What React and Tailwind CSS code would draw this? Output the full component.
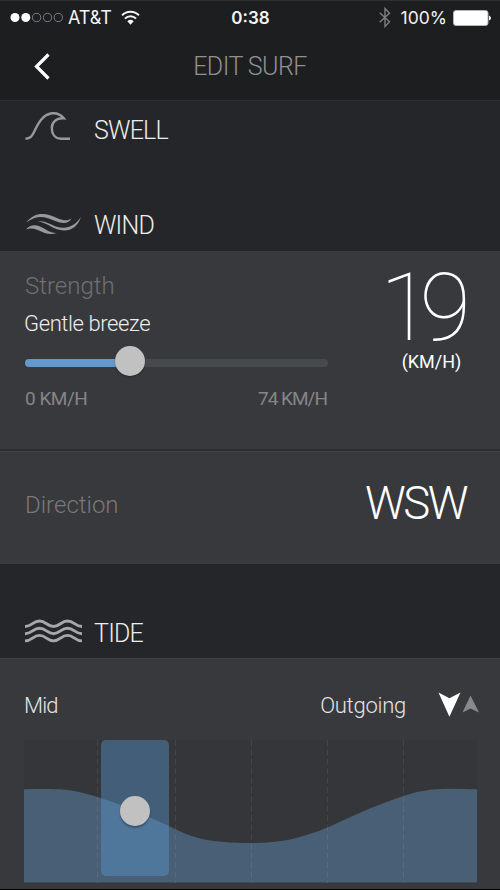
const dividers = [73.5, 151.5, 227.5, 303.5, 379.5];

function StatusBar() {
  return (
    <div className="flex h-[34px] items-center border-t border-[#2d2f31] pl-[10px] pr-[9px] font-['Inter',sans-serif] text-[17.5px] text-[#f4f4f4]">
      <div className="flex flex-1 items-center">
        <svg width="54" height="12" viewBox="0 0 54 12" fill="none">
          <circle cx="5" cy="5.5" r="4.5" fill="#fff" />
          <circle cx="15.8" cy="5.5" r="4.5" fill="#fff" />
          <circle cx="26.6" cy="5.5" r="4.1" stroke="#85878a" strokeWidth="0.9" />
          <circle cx="37.5" cy="5.5" r="4.1" stroke="#85878a" strokeWidth="0.9" />
          <circle cx="48.3" cy="5.5" r="4.1" stroke="#85878a" strokeWidth="0.9" />
        </svg>
        <span className="ml-[4px] text-[18px] tracking-[-0.1px]">AT&amp;T</span>
        <svg className="-mt-px ml-[9px]" width="19" height="15" viewBox="0 0 20 16" fill="none" stroke="#f4f4f4">
          <path d="M1 5.6C6 .6 14 .6 19 5.6" strokeWidth="2.2" />
          <path d="M4 9.200C7.400 5.900 12.600 5.900 16 9.200" strokeWidth="2.2" />
          <path d="M6.600 12Q10 8.900 13.400 12L10 15.600Z" fill="#f4f4f4" stroke="none" />
        </svg>
      </div>
      <span className="pt-[2px] text-[17px] font-semibold">0:38</span>
      <div className="flex flex-1 items-center justify-end">
        <svg width="12" height="21" viewBox="0 0 12 21" fill="none" stroke="#7d7f81" strokeWidth="1.4">
          <path d="M.700 5.800 10.500 14.800 6 19.500V1.500L10.500 6.200.700 15.200" />
        </svg>
        <span className="ml-[10px]">100%</span>
        <svg className="ml-[6px]" width="38" height="16" viewBox="0 0 38 16">
          <rect x=".5" y=".5" width="34.500" height="15" rx="2.500" fill="#fff" stroke="#b5b5b5" />
          <path d="M36 5.500Q38 6.500 38 8T36 10.500Z" fill="#fff" />
        </svg>
      </div>
    </div>
  );
}

function SectionTitle({ icon, children }) {
  return (
    <div className="flex items-center pl-[25px] text-[25px] font-light text-[#ededed]">
      <div className="w-[69px]">{icon}</div>
      <h2 className="pt-[2px] tracking-[-0.8px]">{children}</h2>
    </div>
  );
}

function SwellIcon() {
  return (
    <svg className="-mt-[7px]" width="46" height="30" viewBox="0 0 46 30" fill="none" stroke="#97999b" strokeWidth="2.400">
      <path d="M.500 27.700C6 27.700 7.500 24 9.500 20C13.500 11.500 18 3.500 27 2.300C32 1.700 36.500 4.500 38.800 7.300C31 6.800 26.800 11.500 26.800 17C26.800 23 30 27.700 36 27.700H45" />
    </svg>
  );
}

function WindIcon() {
  return (
    <svg width="57" height="22" viewBox="0 0 57 22" fill="#97999b">
      <path d="M1 9.500C8 1.200 16-.5 25 2.200C33 4.700 40 10 46.500 5.500C44 10.500 38 11 31 8.300C23 5.200 17 2.300 9 5.200C6 6.500 3.500 8 1 9.500Z" />
      <path d="M13 8.500C20 7.500 25 11.500 31 13.500C41 16.500 49 14 56 4C52 15 44 19.500 34 16.800C27 15 21 9.500 13 8.500Z" />
      <path d="M1 16.500C5 11.500 10 11.700 15 13.500C21 16 25 20.500 32 20C25 22.700 19 20 14 17.500C9 15 5 14.800 1 16.500Z" />
    </svg>
  );
}

function TideIcon() {
  return (
    <svg className="-mt-[2px]" width="57" height="24" viewBox="0 0 57 24" fill="none" stroke="#a6a7a9" strokeWidth="2.900">
      <path d="M0 7.500C7 7.500 8 2 14.500 2S22 7.500 28.500 7.500S36 2 42.500 2S50 7.500 57 7.500" />
      <path d="M0 14.700C7 14.700 8 9.200 14.500 9.200S22 14.700 28.500 14.700S36 9.200 42.500 9.200S50 14.700 57 14.700" />
      <path d="M0 21.900C7 21.900 8 16.400 14.500 16.400S22 21.900 28.500 21.900S36 16.400 42.500 16.400S50 21.900 57 21.900" />
    </svg>
  );
}

function TideChart() {
  return (
    <div className="relative mx-[24px] h-[143px] w-[453px] bg-[#353639]">
      <svg className="block" width="453" height="143" viewBox="0 0 453 143" fill="none">
        <path
          d="M0 49.300C10 48.700 25 48.800 36 49.200C50 50 60 53 73.500 57C95 64 120 74 151 89C170 98 185 103 228 103C255 103 275 99 303.500 87.500C330 75 355 64 379.500 56C395 51 405 49 425 48.700Q440 48.700 453 49.300V142.500H0Z"
          fill="#485f75"
        />
        {dividers.map((x) => (
          <path key={x} d={`M${x} 0V143`} stroke="#fff" strokeOpacity=".08" strokeDasharray="6 3.400" />
        ))}
      </svg>
      <div className="absolute left-[77px] top-0 h-[136px] w-[68px] rounded-[5px] bg-[#5b9bd8]/40" />
      <div className="absolute left-[96px] top-[56px] size-[30px] rounded-full bg-[#c1c1c1] shadow-[0_2px_2px_rgba(0,0,0,0.3)]" />
    </div>
  );
}

export default function App() {
  return (
    <div className="flex h-[890px] w-[500px] flex-col overflow-hidden bg-[#25262a] font-['Roboto',sans-serif] leading-none">
      <header className="h-[101px] shrink-0 border-b border-[#2b2c2f] bg-[#1d1e20]">
        <StatusBar />
        <div className="flex h-[64px] items-center justify-between">
          <div className="w-[100px] pl-[34px]">
            <svg width="18" height="27" viewBox="0 0 18 27" fill="none" stroke="#fff" strokeWidth="3.200">
              <path d="M14.500 1.500 2.500 13.500 14.500 25.500" />
            </svg>
          </div>
          <h1 className="text-[25px] font-light tracking-[-0.55px] text-[#8f9092]">EDIT SURF</h1>
          <div className="w-[100px]" />
        </div>
      </header>

      <section className="flex h-[150px] shrink-0 flex-col justify-between">
        <div className="flex h-[57px] flex-col justify-center">
          <SectionTitle icon={<SwellIcon />}>SWELL</SectionTitle>
        </div>
        <div className="flex h-[54px] flex-col justify-center">
          <SectionTitle icon={<WindIcon />}>WIND</SectionTitle>
        </div>
      </section>

      <section className="flex h-[200px] shrink-0 border-b-2 border-t border-b-[#2d2e31] border-t-[#3c3d40] bg-[#38393c] pl-[25px]">
        <div className="w-[303px] pt-[22px]">
          <div className="text-[24px] font-light text-[#6f7073]">Strength</div>
          <div className="-ml-px mt-[15px] text-[22px] font-light tracking-[-0.4px] text-[#ededed]">Gentle breeze</div>
          <div className="relative mt-[24px] h-[8px] rounded-full bg-[#474a4d]">
            <div className="h-full w-[105px] rounded-full bg-[#6399cd]" />
            <div className="absolute -top-[13px] left-[90px] size-[30px] rounded-full bg-[#c1c1c1] shadow-[0_1px_2px_rgba(0,0,0,0.3)]" />
          </div>
          <div className="mt-[22px] flex justify-between text-[19px] text-[#858688]">
            <span className="tracking-[-0.5px]">0 KM/H</span>
            <span className="mr-px tracking-[-1px]">74 KM/H</span>
          </div>
        </div>
        <div className="flex flex-1 flex-col items-center pl-[35px] pt-[12px] text-white">
          <div className="-ml-[24px] text-[94px] font-thin leading-[89px] tracking-[-12px]">19</div>
          <div className="text-[18px] leading-[18px]">(KM/H)</div>
        </div>
      </section>

      <section className="flex h-[113px] shrink-0 items-center justify-between border-t border-[#424346] bg-[#38393c] pb-[8px] pl-[25px] pr-[33px] font-light">
        <span className="pt-[2px] text-[24px] text-[#77787b]">Direction</span>
        <span className="mr-px text-[45.5px] tracking-[-2.5px] text-white">WSW</span>
      </section>

      <section className="flex h-[94px] shrink-0 flex-col justify-end">
        <div className="flex h-[52px] flex-col justify-center">
          <SectionTitle icon={<TideIcon />}>TIDE</SectionTitle>
        </div>
      </section>

      <section className="h-[231px] shrink-0 border-t border-[#3c3d40] bg-[#38393c]">
        <div className="flex h-[81px] items-center pl-[24px] pr-[20px] pt-[12px] text-[22px] font-light text-[#e4e4e4]">
          <span className="tracking-[-0.9px]">Mid</span>
          <span className="ml-auto tracking-[-0.25px]">Outgoing</span>
          <svg className="-mt-px ml-[32px]" width="42" height="26" viewBox="0 0 42 26">
            <path d="M.500.500 11.400 6.200 22.500.500 11.400 24.800Z" fill="#fff" />
            <path d="M32.500 3.500 41 20.500 32.500 16.500 24.500 20.500Z" fill="#88898b" />
          </svg>
        </div>
        <TideChart />
      </section>
      <div className="flex-1 bg-black" />
    </div>
  );
}
